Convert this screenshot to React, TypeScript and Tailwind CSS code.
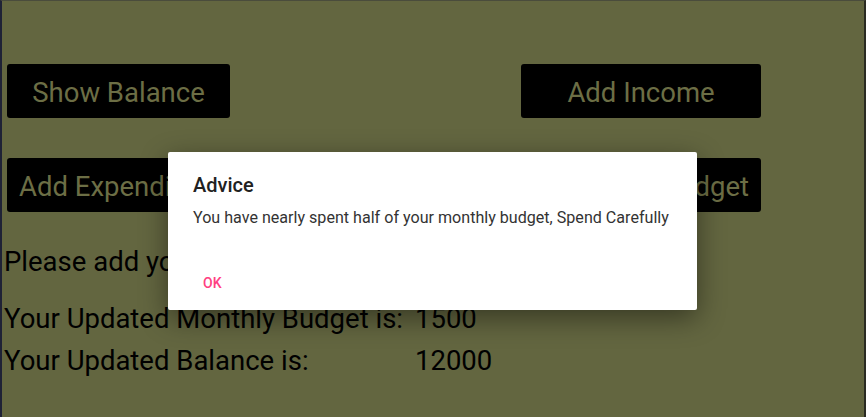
import React from 'react';

const font = { fontFamily: 'Roboto, "Noto Sans", sans-serif' };

const Btn = ({ label, className = '' }: { label: string; className?: string }) => (
  <div
    className={`h-[54px] pt-[3px] bg-black rounded-[3px] flex items-center justify-center text-[27.5px] text-[#6c6e45] ${className}`}
  >
    {label}
  </div>
);

export default function App() {
  return (
    <div
      className="relative w-[866px] h-[417px] overflow-hidden bg-[#636640] border-l-2 border-l-[#1f2236] border-t border-t-[#4a4c3c] border-r-2 border-r-[#2a2b22]"
      style={font}
    >
      {/* Main content */}
      <div className="pt-[63px] pl-[2px] pr-[103px]">
        <div className="flex justify-between pl-[3px]">
          <Btn label="Show Balance" className="w-[223px]" />
          <Btn label="Add Income" className="w-[240px]" />
        </div>
        <div className="flex justify-between mt-[40px] pl-[3px]">
          <Btn label="Add Expenditure" className="w-[250px] justify-start pl-[12px]" />
          <Btn label="Add Budget" className="w-[160px] justify-end pr-[12px]" />
        </div>
        <div className="mt-[33px] text-[27.5px] text-black leading-[34px]">
          Please add your monthly budget
        </div>
        <div className="mt-[19px] text-[27.5px] text-black leading-[42px]">
          <div className="flex">
            <span className="w-[411px]">Your Updated Monthly Budget is:</span>
            <span>1500</span>
          </div>
          <div className="flex">
            <span className="w-[411px]">Your Updated Balance is:</span>
            <span>12000</span>
          </div>
        </div>
      </div>

      {/* Dialog */}
      <div className="absolute left-[166px] top-[151px] w-[529px] h-[158px] bg-white rounded-[2px] shadow-[0_8px_28px_rgba(0,0,0,0.45)] px-[25px] pt-[20px]">
        <div className="text-[20px] font-medium text-[#212121] leading-[26px]">Advice</div>
        <div className="mt-[10px] text-[16.1px] text-[#333333] leading-[20px]">
          You have nearly spent half of your monthly budget, Spend Carefully
        </div>
        <div className="mt-[45px] ml-[10px] text-[14px] font-medium text-[#ff4081]">OK</div>
      </div>
    </div>
  );
}
